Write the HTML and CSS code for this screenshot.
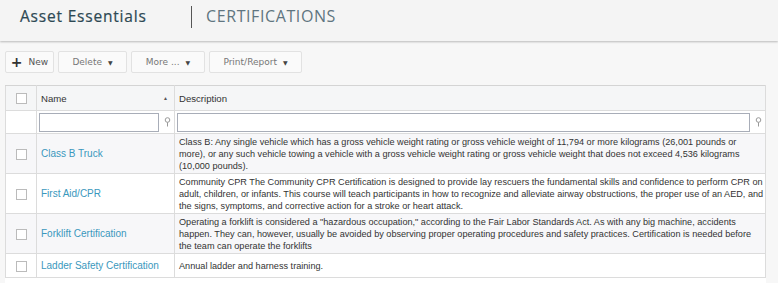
FILE: index.html
```html
<!DOCTYPE html>
<html lang="en">
<head>
  <meta charset="UTF-8">
  <title>Asset Essentials - Certifications</title>
  <link rel="stylesheet" href="styles.css">
</head>
<body>

  <div class="topbar">
    <span class="brand">Asset Essentials</span>
    <span class="divider"></span>
    <span class="page-title">CERTIFICATIONS</span>
  </div>

  <div class="toolbar">
    <button class="btn btn-new"><span class="plus">+</span> New</button>
    <button class="btn btn-delete">Delete <span class="caret">&#9660;</span></button>
    <button class="btn btn-more">More ... <span class="caret">&#9660;</span></button>
    <button class="btn btn-print">Print/Report <span class="caret">&#9660;</span></button>
  </div>

  <div class="grid-wrap">
    <table class="grid">
      <colgroup>
        <col class="col-check">
        <col class="col-name">
        <col class="col-desc">
      </colgroup>
      <thead>
        <tr class="head-row">
          <th><span class="check"></span></th>
          <th><div class="th-name">Name <span class="sort">&#9650;</span></div></th>
          <th>Description</th>
        </tr>
        <tr class="filter-row">
          <td></td>
          <td><div class="filter"><input type="text"><svg class="pin" width="7" height="10" viewBox="0 0 7 10"><circle cx="3.5" cy="3" r="2.3" fill="none" stroke="#999" stroke-width="1"/><line x1="3.5" y1="5.3" x2="3.5" y2="9.5" stroke="#999" stroke-width="1"/></svg></div></td>
          <td><div class="filter"><input type="text"><svg class="pin" width="7" height="10" viewBox="0 0 7 10"><circle cx="3.5" cy="3" r="2.3" fill="none" stroke="#999" stroke-width="1"/><line x1="3.5" y1="5.3" x2="3.5" y2="9.5" stroke="#999" stroke-width="1"/></svg></div></td>
        </tr>
      </thead>
      <tbody>
        <tr class="alt">
          <td><span class="check"></span></td>
          <td><a href="#">Class B Truck</a></td>
          <td>Class B: Any single vehicle which has a gross vehicle weight rating or gross vehicle weight of 11,794 or more kilograms (26,001 pounds or more), or any such vehicle towing a vehicle with a gross vehicle weight rating or gross vehicle weight that does not exceed 4,536 kilograms (10,000 pounds).</td>
        </tr>
        <tr>
          <td><span class="check"></span></td>
          <td><a href="#">First Aid/CPR</a></td>
          <td>Community CPR The Community CPR Certification is designed to provide lay rescuers the fundamental skills and confidence to perform CPR on adult, children, or infants. This course will teach participants in how to recognize and alleviate airway obstructions, the proper use of an AED, and the signs, symptoms, and corrective action for a stroke or heart attack.</td>
        </tr>
        <tr class="alt">
          <td><span class="check"></span></td>
          <td><a href="#">Forklift Certification</a></td>
          <td>Operating a forklift is considered a "hazardous occupation," according to the Fair Labor Standards Act. As with any big machine, accidents happen. They can, however, usually be avoided by observing proper operating procedures and safety practices. Certification is needed before the team can operate the forklifts</td>
        </tr>
        <tr>
          <td><span class="check"></span></td>
          <td><a href="#">Ladder Safety Certification</a></td>
          <td>Annual ladder and harness training.</td>
        </tr>
      </tbody>
    </table>
    <div class="pager">
      <span class="dot"></span><span class="dot"></span>
      <span class="gap"></span>
      <span class="dot"></span><span class="dot"></span>
    </div>
  </div>

</body>
</html>
```

FILE: styles.css
```css
body {
  margin: 0;
  font-family: "Liberation Sans", Arial, sans-serif;
  background-color: #f7f7f7;
  color: #333;
}
.topbar {
  display: flex;
  align-items: center;
  height: 41px;
  padding-left: 20px;
  background-color: #f4f4f4;
  box-shadow: 0 1px 2px rgba(0,0,0,0.25);
  position: relative;
  font-family: "Open Sans", sans-serif;
  font-size: 16px;
}
.brand {
  color: #2d4853;
  width: 171px;
  padding-bottom: 9px;
  font-size: 15.5px;
  letter-spacing: 0.8px;
  -webkit-text-stroke: 0.2px #2d4853;
}
.divider {
  width: 1px;
  height: 22px;
  background-color: #555;
  margin-bottom: 8px;
}
.page-title {
  color: #5f7580;
  margin-left: 14px;
  letter-spacing: 0.6px;
  padding-bottom: 9px;
}
.toolbar {
  display: flex;
  gap: 4px;
  padding: 10px 5px 12px;
}
.btn {
  height: 22px;
  padding: 0;
  border: 1px solid #e2e2e2;
  border-radius: 2px;
  background-color: #fafafa;
  color: #777;
  font-family: "DejaVu Sans", sans-serif;
  font-size: 9px;
  display: flex;
  align-items: center;
  justify-content: center;
}
.btn-new { width: 49px; color: #555; }
.btn-delete { width: 69px; }
.btn-more { width: 74px; }
.btn-print { width: 93px; }
.plus {
  font-size: 14px;
  font-weight: bold;
  color: #333;
  margin-right: 6px;
  line-height: 1;
}
.caret {
  font-size: 6px;
  color: #444;
  margin-left: 6px;
}
.grid-wrap {
  margin: 0 12px 0 5px;
  background-color: #fff;
}
.grid {
  width: 100%;
  border-collapse: collapse;
  table-layout: fixed;
  border: 1px solid #dcdcdc;
  font-size: 9.15px;
}
.col-check { width: 31px; }
.col-name { width: 138px; }
.grid th, .grid td {
  border: 1px solid #dcdcdc;
  border-top: 1px solid #d4d4d4;
  text-align: left;
  vertical-align: middle;
  color: #333;
}
.grid th {
  background-color: #f5f6f7;
  font-weight: normal;
  font-size: 9.6px;
  height: 24px;
  padding: 0 4px;
}
.th-name {
  display: flex;
  justify-content: space-between;
}
.sort {
  font-size: 5px;
  color: #555;
  margin-right: 2px;
  align-self: center;
}
.filter-row td {
  height: 22px;
  background-color: #fff;
  padding: 0 1px 0 2px;
}
.filter {
  display: flex;
  align-items: center;
  gap: 3px;
}
.filter input {
  flex: 1;
  height: 19px;
  box-sizing: border-box;
  border: 1px solid #a8adb8;
  min-width: 0;
  padding: 0 3px;
  margin: 0;
}
.pin {
  margin: 0 2px;
}
.grid tbody td {
  padding: 2px 1px 1px 4px;
  line-height: 12px;
  height: 20px;
}
.grid tbody tr.alt td {
  background-color: #f7f7f9;
}
.grid th:first-child, .grid td:first-child {
  text-align: center;
  padding: 0;
}
.check {
  display: inline-block;
  width: 9px;
  height: 9px;
  border: 1px solid #bbb;
  background-color: #fff;
  vertical-align: middle;
}
.grid a {
  color: #3a98bd;
  text-decoration: none;
  font-size: 10px;
}
.pager {
  display: flex;
  gap: 16px;
  padding: 6px 0 0 130px;
  height: 3px;
  overflow: hidden;
}
.dot {
  flex: none;
  width: 10px;
  height: 10px;
  border-radius: 50%;
  background-color: #e8e8e8;
}
.gap {
  width: 30px;
}
```
